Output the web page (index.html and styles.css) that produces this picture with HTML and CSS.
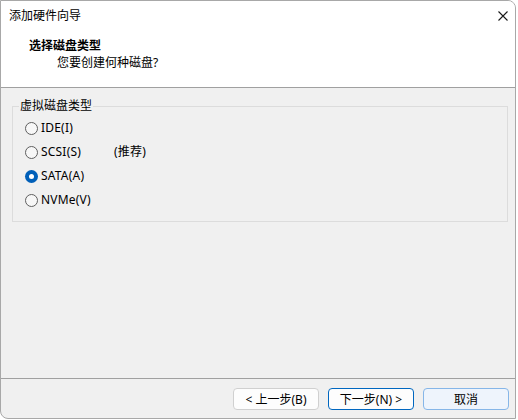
FILE: index.html
```html
<!DOCTYPE html>
<html lang="zh-CN">
<head>
    <meta charset="UTF-8">
    <title>添加硬件向导</title>
    <link rel="stylesheet" href="styles.css">
</head>
<body>
    <div class="window">
        <div class="titlebar">
            <span class="title">添加硬件向导</span>
            <svg class="close" width="10" height="10" viewBox="0 0 10 10">
                <path d="M0.5 0.5 L9.5 9.5 M9.5 0.5 L0.5 9.5" stroke="#1a1a1a" stroke-width="1.1" fill="none"/>
            </svg>
        </div>
        <div class="header">
            <div class="header-title">选择磁盘类型</div>
            <div class="header-sub">您要创建何种磁盘?</div>
        </div>
        <div class="content">
            <fieldset class="group">
                <legend>虚拟磁盘类型</legend>
                <div class="option"><span class="radio"></span>IDE(I)</div>
                <div class="option"><span class="radio"></span>SCSI(S)<span class="hint">(推荐)</span></div>
                <div class="option"><span class="radio radio-checked"></span>SATA(A)</div>
                <div class="option"><span class="radio"></span>NVMe(V)</div>
            </fieldset>
        </div>
        <div class="footer">
            <button class="btn">&lt; 上一步(B)</button>
            <button class="btn btn-default">下一步(N) &gt;</button>
            <button class="btn btn-cancel">取消</button>
        </div>
    </div>
</body>
</html>
```

FILE: styles.css
```css
* {
    margin: 0;
    padding: 0;
    box-sizing: border-box;
}

body {
    background-color: #ffffff;
    font-family: "Noto Sans", "Noto Sans CJK SC", sans-serif;
    font-size: 12px;
    color: #000000;
}

.window {
    width: 516px;
    height: 419px;
    background-color: #f0f0f0;
    border: 1px solid #a8a8a8;
    border-radius: 0 8px 0 8px;
    overflow: hidden;
    display: flex;
    flex-direction: column;
}

.titlebar {
    height: 29px;
    background-color: #ffffff;
    display: flex;
    align-items: center;
    justify-content: space-between;
    padding: 0 7px 0 8px;
}

.title {
    line-height: 16px;
}

.header {
    height: 58px;
    background-color: #ffffff;
    border-bottom: 1px solid #a0a0a0;
    padding-top: 8px;
}

.header-title {
    font-weight: bold;
    line-height: 16px;
    padding-left: 28px;
}

.header-sub {
    line-height: 16px;
    padding-left: 56px;
    margin-top: 1px;
}

.content {
    flex: 1;
    padding: 10px 7px 0 11px;
}

.group {
    border: 1px solid #dcdcdc;
    padding: 2px 6px 9px 12px;
}

.group legend {
    padding: 0 1px;
    margin-left: -6px;
    line-height: 16px;
}

.option {
    height: 24px;
    display: flex;
    align-items: center;
    line-height: 16px;
    letter-spacing: 0.2px;
}

.radio {
    width: 13px;
    height: 13px;
    border: 1px solid #5f5f5f;
    border-radius: 50%;
    background-color: #f7f7f7;
    margin-right: 3px;
}

.radio-checked {
    border: none;
    background-color: #005fb8;
    position: relative;
}

.radio-checked::after {
    content: "";
    position: absolute;
    left: 4px;
    top: 4px;
    width: 5px;
    height: 5px;
    border-radius: 50%;
    background-color: #ffffff;
}

.hint {
    margin-left: 33px;
}

.footer {
    height: 40px;
    border-top: 1px solid #a0a0a0;
    display: flex;
    justify-content: flex-end;
    align-items: flex-start;
    gap: 9px;
    padding: 9px 6px 0 0;
}

.btn {
    width: 86px;
    height: 22px;
    font-family: inherit;
    font-size: 12px;
    color: #000000;
    background-color: #fdfdfd;
    border: 1px solid #d0d0d0;
    border-radius: 4px;
}

.btn-default {
    border-color: #0067c0;
}

.btn-cancel {
    background-color: #eef4fc;
    border-color: #86b6e8;
}
```
